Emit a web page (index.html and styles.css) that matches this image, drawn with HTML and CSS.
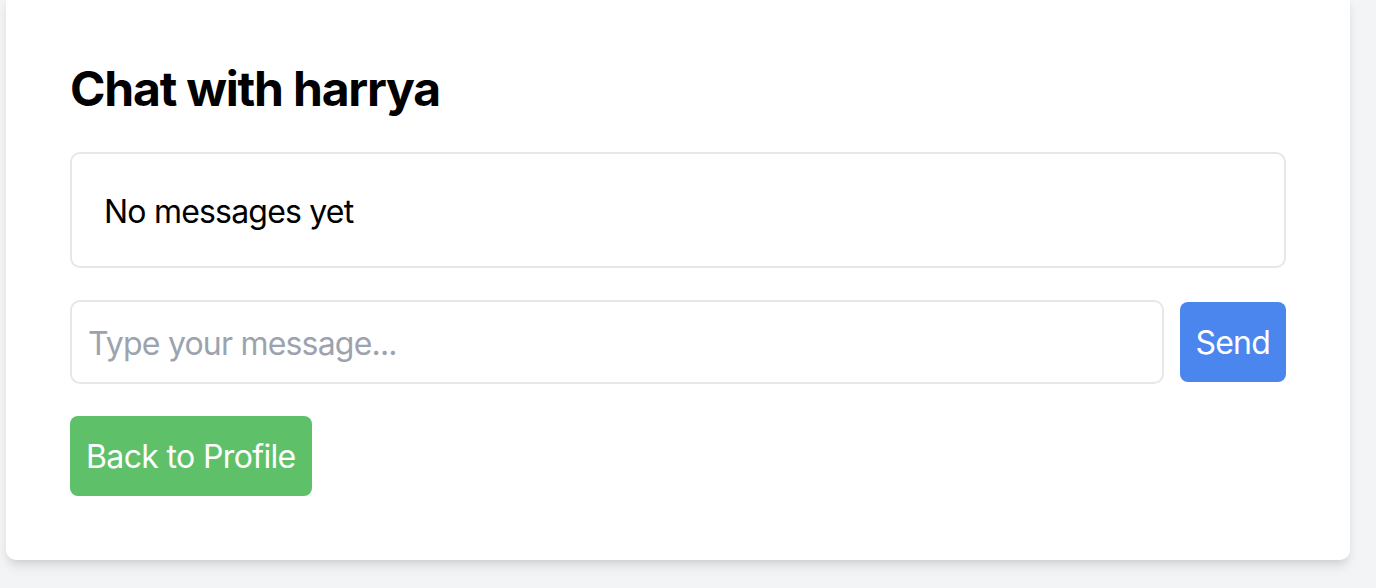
FILE: index.html
```html
<!DOCTYPE html>
<html lang="en">
<head>
<meta charset="utf-8">
<title>Chat with harrya</title>
<link rel="stylesheet" href="styles.css">
</head>
<body>
<div class="page">
  <div class="card">
    <h1 class="title">Chat with harrya</h1>
    <div class="messages">No messages yet</div>
    <form class="composer">
      <input class="composer-input" type="text" placeholder="Type your message...">
      <button class="btn btn-send" type="button">Send</button>
    </form>
    <button class="btn btn-back" type="button">Back to Profile</button>
  </div>
</div>
</body>
</html>
```

FILE: styles.css
```css
* { box-sizing: border-box; }
html, body {
  margin: 0;
  padding: 0;
  background: #f3f4f6;
  font-family: Inter, "Noto Sans", "Liberation Sans", sans-serif;
  color: #000;
}
.page {
  padding: 0 26px 0 6px;
  height: 588px;
  overflow: hidden;
}
.card {
  margin-top: -8px;
  background: #fff;
  border-radius: 10px;
  padding: 64px;
  box-shadow: 0 8px 12px -2px rgba(0,0,0,0.10), 0 4px 8px -4px rgba(0,0,0,0.10);
}
.title {
  margin: 0 0 32px;
  padding-top: 1px;
  height: 64px;
  font-size: 48px;
  line-height: 64px;
  font-weight: 700;
  letter-spacing: -0.025em;
}
.messages {
  border: 2px solid #e5e7eb;
  border-radius: 10px;
  padding: 34px 32px 30px;
  font-size: 32px;
  line-height: 48px;
  letter-spacing: -0.025em;
  margin-bottom: 32px;
}
.composer {
  display: flex;
  align-items: center;
  gap: 16px;
  margin: 0 0 32px;
}
.composer-input {
  flex: 1;
  min-width: 0;
  border: 2px solid #e5e7eb;
  border-radius: 10px;
  padding: 17px 16px 15px;
  font-family: inherit;
  font-size: 32px;
  line-height: 48px;
  letter-spacing: -0.025em;
  height: 84px;
  color: #000;
  outline: none;
}
.composer-input::placeholder { color: #9ca3af; }
.btn {
  border: 0;
  border-radius: 8px;
  padding: 17px 16px 15px;
  font-family: inherit;
  font-size: 32px;
  line-height: 48px;
  letter-spacing: -0.025em;
  color: #fff;
  white-space: nowrap;
  cursor: pointer;
}
.btn-send { background: #4b86ef; }
.btn-back { background: #5ec16a; letter-spacing: -0.02em; }
```
